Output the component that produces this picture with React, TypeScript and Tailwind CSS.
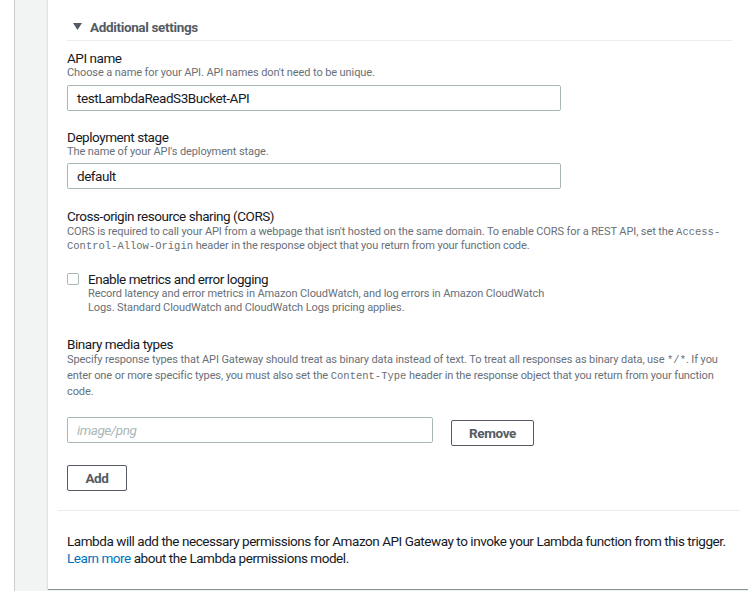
import React from "react";

const font = { fontFamily: "Roboto, 'Noto Sans', sans-serif" };

function Label({ children }: { children: React.ReactNode }) {
  return <div className="text-[13.5px] leading-[16px] tracking-[-0.45px] text-[#16191f]">{children}</div>;
}

function Desc({ children, className = "" }: { children: React.ReactNode; className?: string }) {
  return <div className={"text-[11px] leading-[14px] tracking-[-0.1px] text-[#687078] " + className}>{children}</div>;
}

function Mono({ children }: { children: React.ReactNode }) {
  return <span className="font-['Liberation_Mono',monospace] text-[10.5px] tracking-normal">{children}</span>;
}

export default function App() {
  return (
    <div className="flex min-h-[591px] w-[748px] overflow-hidden bg-white" style={font}>
      <div className="w-[14px] shrink-0 bg-white" />
      <div className="flex flex-1 border-l border-[#c9cfcf] bg-[#f2f3f3] pl-[33px] pb-[2px]">
        <div className="flex-1 border-b border-[#879596] bg-white pl-[10px] pr-[8px] shadow-[-1px_0_1px_rgba(0,0,0,0.08)]">
          <div className="ml-[9px] mr-[8px]">
            <div className="flex items-center border-b border-[#eaeded] pt-[17px] pb-[3px] h-[41px]">
              <svg width="9" height="8" viewBox="0 0 9 8" className="ml-[6px] mr-[8px]">
                <path d="M0 0 L9 0 L4.5 7 Z" fill="#545b64" />
              </svg>
              <span className="text-[13.5px] font-bold leading-[20px] tracking-[-0.35px] text-[#545b64]">Additional settings</span>
            </div>

            <div className="pt-[9px]">
              <Label>API name</Label>
              <Desc>Choose a name for your API. API names don't need to be unique.</Desc>
              <div className="mt-[5px] flex h-[26px] w-[494px] items-center rounded-[2px] border border-[#aab7b8] px-[9px] text-[13.5px] tracking-[-0.45px] text-[#16191f]">
                testLambdaReadS3Bucket-API
              </div>
            </div>

            <div className="pt-[18px]">
              <Label>Deployment stage</Label>
              <Desc>The name of your API's deployment stage.</Desc>
              <div className="mt-[4px] flex h-[26px] w-[494px] items-center rounded-[2px] border border-[#aab7b8] px-[9px] text-[13.5px] tracking-[-0.45px] text-[#16191f]">
                default
              </div>
            </div>

            <div className="pt-[19px]">
              <Label>Cross-origin resource sharing (CORS)</Label>
              <Desc className="mt-[1px]">
                CORS is required to call your API from a webpage that isn't hosted on the same domain. To enable CORS for a REST API, set the <Mono>Access-</Mono>
                <br />
                <Mono>Control-Allow-Origin</Mono> header in the response object that you return from your function code.
              </Desc>
            </div>

            <div className="mt-[18px] flex">
              <div className="mt-[2px] h-[12px] w-[12px] shrink-0 rounded-[2px] border border-[#aab7b8] bg-white" />
              <div className="ml-[9px]">
                <Label>Enable metrics and error logging</Label>
                <Desc className="leading-[13px]">
                  Record latency and error metrics in Amazon CloudWatch, and log errors in Amazon CloudWatch
                  <br />
                  Logs. Standard CloudWatch and CloudWatch Logs pricing applies.
                </Desc>
              </div>
            </div>

            <div className="pt-[21px]">
              <Label>Binary media types</Label>
              <Desc className="leading-[15px]">
                Specify response types that API Gateway should treat as binary data instead of text. To treat all responses as binary data, use <Mono>*/*</Mono>. If you
                <br />
                enter one or more specific types, you must also set the <Mono>Content-Type</Mono> header in the response object that you return from your function
                <br />
                code.
              </Desc>
            </div>

            <div className="mt-[18px] flex items-start">
              <div className="flex h-[26px] w-[366px] items-center rounded-[2px] border border-[#aab7b8] px-[9px] text-[13.5px] italic tracking-[-0.45px] text-[#aab7b8]">
                image/png
              </div>
              <button className="ml-[18px] mt-[3px] h-[26px] w-[83px] rounded-[2px] border border-[#545b64] bg-white text-[13.5px] font-bold tracking-[-0.35px] text-[#545b64]">
                Remove
              </button>
            </div>

            <button className="mt-[19px] h-[26px] w-[60px] rounded-[2px] border border-[#545b64] bg-white text-[13.5px] font-bold tracking-[-0.35px] text-[#545b64]">
              Add
            </button>
          </div>

          <div className="mt-[19px] border-t border-[#eaeded]" />
          <div className="ml-[9px] pt-[22px] pb-[22px] text-[13.5px] leading-[17px] tracking-[-0.45px] text-[#16191f]">
            Lambda will add the necessary permissions for Amazon API Gateway to invoke your Lambda function from this trigger.
            <br />
            <span className="text-[#0073bb]">Learn more</span> about the Lambda permissions model.
          </div>
        </div>
      </div>
    </div>
  );
}
